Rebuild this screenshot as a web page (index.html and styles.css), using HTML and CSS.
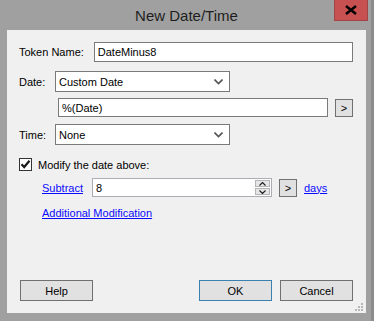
FILE: index.html
```html
<!DOCTYPE html>
<html lang="en">
<head>
  <meta charset="UTF-8" />
  <title>New Date/Time</title>
  <link rel="stylesheet" href="styles.css">
</head>
<body>

  <div class="window">
    <!-- Title bar -->
    <div class="titlebar">
      <span class="title">New Date/Time</span>
      <button class="close" aria-label="Close">
        <svg width="12" height="10" viewBox="0 0 12 10">
          <path d="M1 1 L11 9 M11 1 L1 9" stroke="#000" stroke-width="2.4" />
        </svg>
      </button>
    </div>

    <!-- Dialog body -->
    <div class="client">
      <div class="row row-token">
        <label class="label label-token">Token Name:</label>
        <input class="field field-token" type="text" value="DateMinus8" />
      </div>

      <div class="row row-date">
        <label class="label label-short">Date:</label>
        <div class="combo">
          <span>Custom Date</span>
          <svg class="chevron" width="9" height="6" viewBox="0 0 9 6">
            <path d="M0.5 0.5 L4.5 4.5 L8.5 0.5" fill="none" stroke="#555" stroke-width="1.6" />
          </svg>
        </div>
      </div>

      <div class="row row-expr">
        <input class="field field-expr" type="text" value="%(Date)" />
        <button class="mini">&gt;</button>
      </div>

      <div class="row row-time">
        <label class="label label-short">Time:</label>
        <div class="combo">
          <span>None</span>
          <svg class="chevron" width="9" height="6" viewBox="0 0 9 6">
            <path d="M0.5 0.5 L4.5 4.5 L8.5 0.5" fill="none" stroke="#555" stroke-width="1.6" />
          </svg>
        </div>
      </div>

      <div class="row row-check">
        <span class="checkbox">
          <svg width="11" height="11" viewBox="0 0 11 11">
            <path d="M1.5 5.2 L4.2 8 L9.5 1.8" fill="none" stroke="#1a1a1a" stroke-width="2.2" />
          </svg>
        </span>
        <span class="check-label">Modify the date above:</span>
      </div>

      <div class="row row-modify">
        <a class="link link-op" href="#">Subtract</a>
        <div class="spin">
          <span class="spin-value">8</span>
          <div class="spin-btns">
            <span class="spin-btn">
              <svg width="7" height="4" viewBox="0 0 7 4"><path d="M0.5 3.5 L3.5 0.5 L6.5 3.5" fill="none" stroke="#222" stroke-width="1.2" /></svg>
            </span>
            <span class="spin-btn">
              <svg width="7" height="4" viewBox="0 0 7 4"><path d="M0.5 0.5 L3.5 3.5 L6.5 0.5" fill="none" stroke="#222" stroke-width="1.2" /></svg>
            </span>
          </div>
        </div>
        <button class="mini">&gt;</button>
        <a class="link link-unit" href="#">days</a>
      </div>

      <div class="row row-extra">
        <a class="link" href="#">Additional Modification</a>
      </div>

      <!-- Dialog buttons -->
      <div class="row row-buttons">
        <button class="btn">Help</button>
        <span class="spacer"></span>
        <button class="btn btn-default">OK</button>
        <button class="btn">Cancel</button>
      </div>

      <svg class="grip" width="8" height="8" viewBox="0 0 8 8">
        <rect x="6" y="0" width="2" height="2" fill="#b8b8b8" />
        <rect x="3" y="3" width="2" height="2" fill="#b8b8b8" />
        <rect x="6" y="3" width="2" height="2" fill="#b8b8b8" />
        <rect x="0" y="6" width="2" height="2" fill="#b8b8b8" />
        <rect x="3" y="6" width="2" height="2" fill="#b8b8b8" />
        <rect x="6" y="6" width="2" height="2" fill="#b8b8b8" />
      </svg>
    </div>
  </div>

</body>
</html>
```

FILE: styles.css
```css
* {
  margin: 0;
  padding: 0;
  box-sizing: border-box;
}

body {
  font-family: "Liberation Sans", Arial, sans-serif;
  font-size: 11px;
  color: #000;
  background: #a0a0a0;
  width: 374px;
  height: 321px;
  overflow: hidden;
}

/* Window frame */
.window {
  width: 374px;
  height: 321px;
  border-right: 3px solid #8c8c8c;
}

.titlebar {
  position: relative;
  height: 30px;
  display: flex;
  justify-content: center;
  align-items: center;
}
.title {
  font-size: 15px;
  color: #1e1e1e;
  padding-top: 1px;
  padding-left: 2px;
}
.close {
  position: absolute;
  top: 0;
  right: 3px;
  width: 34px;
  height: 21px;
  background: #c75050;
  border: 1px solid #a04545;
  border-top: none;
  display: flex;
  align-items: center;
  justify-content: center;
}

/* Client area */
.client {
  position: relative;
  margin-left: 7px;
  width: 359px;
  height: 283px;
  background: #f0f0f0;
  padding: 12px 13px 12px 12px;
  display: flex;
  flex-direction: column;
}

.row {
  display: flex;
  align-items: center;
}

.label-token {
  width: 75px;
}
.label-short {
  width: 36px;
}

.field {
  font-family: inherit;
  font-size: 11px;
  border: 1px solid #7a7a7a;
  background: #fff;
  padding: 0 3px;
  outline: none;
  color: #000;
}
.field-token {
  width: 260px;
  height: 20px;
}

.combo {
  width: 175px;
  height: 21px;
  border: 1px solid #7a7a7a;
  background: #fff;
  display: flex;
  align-items: center;
  justify-content: space-between;
  padding: 0 6px 0 3px;
}

.row-date {
  margin-top: 9px;
}
.row-expr {
  margin-top: 6px;
  padding-left: 39px;
}
.field-expr {
  width: 270px;
  height: 19px;
}

.mini {
  width: 18px;
  height: 18px;
  margin-left: 7px;
  font-family: inherit;
  font-size: 11px;
  background: #e1e1e1;
  border: 1px solid #707070;
  color: #000;
}

.row-time {
  margin-top: 7px;
}

.row-check {
  margin-top: 13px;
}
.checkbox {
  width: 13px;
  height: 13px;
  border: 1px solid #333;
  background: #fff;
  display: flex;
  align-items: center;
  justify-content: center;
}
.check-label {
  margin-left: 6px;
}

.row-modify {
  margin-top: 7px;
  padding-left: 23px;
}
.link {
  color: #0a0aff;
  text-decoration: underline;
}
.link-op {
  width: 50px;
}
.spin {
  width: 180px;
  height: 19px;
  border: 1px solid #abadb3;
  background: #fff;
  display: flex;
  align-items: center;
  justify-content: space-between;
  padding: 0 1px 0 3px;
}
.spin-btns {
  display: flex;
  flex-direction: column;
  gap: 1px;
}
.spin-btn {
  width: 15px;
  height: 7px;
  background: #e6e6e6;
  border: 1px solid #b4b4b4;
  display: flex;
  align-items: center;
  justify-content: center;
}
.link-unit {
  margin-left: 7px;
}

.row-extra {
  margin-top: 10px;
  padding-left: 23px;
}

/* Bottom buttons */
.row-buttons {
  margin-top: auto;
  padding-left: 1px;
}
.spacer {
  flex: 1;
}
.btn {
  width: 73px;
  height: 21px;
  font-family: inherit;
  font-size: 11px;
  background: #e1e1e1;
  border: 1px solid #707070;
  color: #000;
}
.btn-default {
  border-color: #3c7fb1;
  margin-right: 8px;
}

.grip {
  position: absolute;
  right: 3px;
  bottom: 2px;
}
```
